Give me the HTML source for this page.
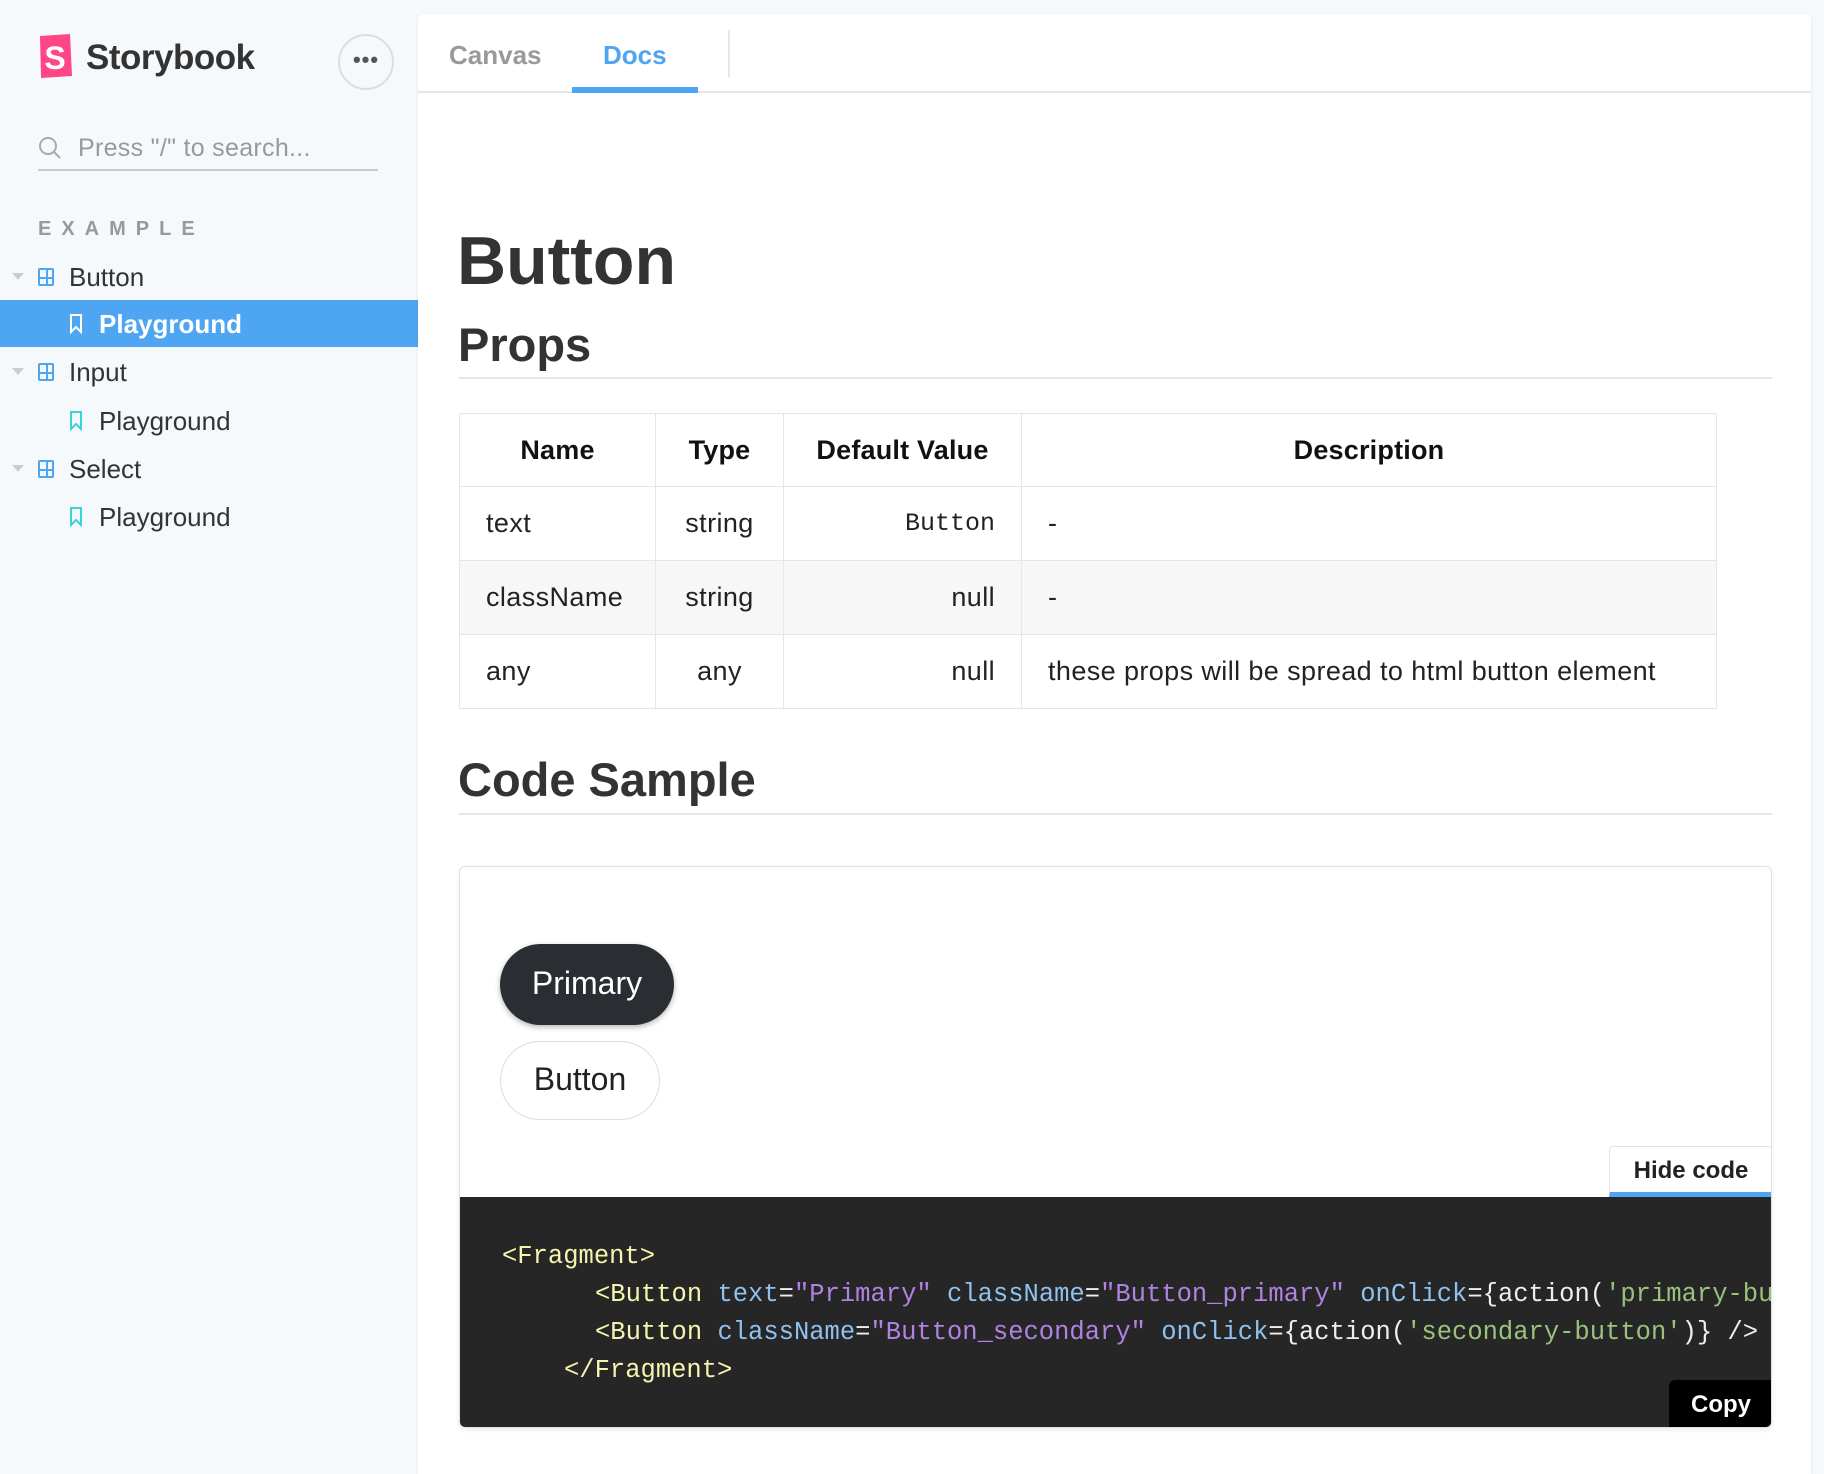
<!DOCTYPE html>
<html><head><meta charset="utf-8"><style>
*{box-sizing:border-box;margin:0;padding:0}
body{width:1824px;height:1458px;background:#f6f9fc;font-family:"Liberation Sans",sans-serif;color:#333;position:relative;overflow:hidden}
.abs{position:absolute}
.side-item{position:absolute;left:0;width:418px;height:48px;font-size:26px;line-height:48px;color:#333}
.main{position:absolute;left:418px;top:14px;width:1393px;height:1460px;background:#fff;border-radius:6px 6px 0 0;box-shadow:0 1px 4px rgba(0,0,0,.08)}
table{border-collapse:collapse;position:absolute;left:459px;top:413px;width:1258px;font-size:27px;letter-spacing:0.4px}
td,th{border:1.5px solid #e6e6e6;padding:0 26px}
th{height:73px;font-weight:bold;color:#111;letter-spacing:0.2px}
td{height:74px;color:#222}
.code{font-family:"Liberation Mono",monospace;font-size:25.5px;position:absolute;white-space:pre;color:#eee}
.t{color:#f5f5b0}.a{color:#8fc1ef}.s{color:#b082e2}.g{color:#9ac27d}
</style></head><body>
<svg class="abs" style="left:38px;top:34px" width="36" height="44" viewBox="0 0 36 44"><path d="M2 2 L32 0 L34 42 L3 44 Z" fill="#ff4785"/><text x="17" y="35" fill="#fff" font-family="Liberation Sans" font-weight="bold" font-size="32" text-anchor="middle">S</text></svg>
<div class="abs" style="left:86px;top:38px;font-size:35px;font-weight:bold;color:#333;letter-spacing:-0.5px">Storybook</div>
<div class="abs" style="left:338px;top:34px;width:56px;height:56px;border:2px solid #ddd;border-radius:50%;text-align:center;line-height:48px;font-size:22px;font-weight:bold;color:#555;letter-spacing:1px">•••</div>
<svg class="abs" style="left:38px;top:136px" width="24" height="24" viewBox="0 0 24 24"><circle cx="10" cy="10" r="8" fill="none" stroke="#aaa" stroke-width="2"/><path d="M16 16 L22 22" stroke="#aaa" stroke-width="2"/></svg>
<div class="abs" style="left:78px;top:134px;font-size:25px;color:#999;letter-spacing:0.3px">Press "/" to search...</div>
<div class="abs" style="left:38px;top:169px;width:340px;height:2px;background:#ccc"></div>
<div class="abs" style="left:38px;top:218px;font-size:20px;font-weight:bold;color:#999;letter-spacing:10px">EXAMPLE</div>

<div class="side-item" style="top:253px"><span class="abs" style="left:12px;top:20px;border:6px solid transparent;border-top:7px solid #ccc"></span><span class="abs" style="left:38px;top:15px;width:16px;height:18px;border:2px solid #4ea5f2;border-radius:2px;background:linear-gradient(#4ea5f2,#4ea5f2) 6px 0/2px 100% no-repeat,linear-gradient(#4ea5f2,#4ea5f2) 0 7px/100% 2px no-repeat"></span><span class="abs" style="left:69px">Button</span></div>
<div class="side-item" style="top:300px;height:47px;background:#4ea5f2;color:#fff;font-weight:bold"><svg class="abs" style="left:69px;top:14px" width="14" height="20" viewBox="0 0 14 20"><path d="M2 1 H12 V18 L7 13 L2 18 Z" fill="none" stroke="#fff" stroke-width="2"/></svg><span class="abs" style="left:99px">Playground</span></div>
<div class="side-item" style="top:348px"><span class="abs" style="left:12px;top:20px;border:6px solid transparent;border-top:7px solid #ccc"></span><span class="abs" style="left:38px;top:15px;width:16px;height:18px;border:2px solid #4ea5f2;border-radius:2px;background:linear-gradient(#4ea5f2,#4ea5f2) 6px 0/2px 100% no-repeat,linear-gradient(#4ea5f2,#4ea5f2) 0 7px/100% 2px no-repeat"></span><span class="abs" style="left:69px">Input</span></div>
<div class="side-item" style="top:397px"><svg class="abs" style="left:69px;top:14px" width="14" height="20" viewBox="0 0 14 20"><path d="M2 1 H12 V18 L7 13 L2 18 Z" fill="none" stroke="#37d5d3" stroke-width="2"/></svg><span class="abs" style="left:99px">Playground</span></div>
<div class="side-item" style="top:445px"><span class="abs" style="left:12px;top:20px;border:6px solid transparent;border-top:7px solid #ccc"></span><span class="abs" style="left:38px;top:15px;width:16px;height:18px;border:2px solid #4ea5f2;border-radius:2px;background:linear-gradient(#4ea5f2,#4ea5f2) 6px 0/2px 100% no-repeat,linear-gradient(#4ea5f2,#4ea5f2) 0 7px/100% 2px no-repeat"></span><span class="abs" style="left:69px">Select</span></div>
<div class="side-item" style="top:493px"><svg class="abs" style="left:69px;top:14px" width="14" height="20" viewBox="0 0 14 20"><path d="M2 1 H12 V18 L7 13 L2 18 Z" fill="none" stroke="#37d5d3" stroke-width="2"/></svg><span class="abs" style="left:99px">Playground</span></div>

<div class="main"></div>
<div class="abs" style="left:418px;top:91px;width:1393px;height:2px;background:#e6e6e6"></div>
<div class="abs" style="left:449px;top:40px;font-size:26px;font-weight:bold;color:#999">Canvas</div>
<div class="abs" style="left:603px;top:40px;font-size:26px;font-weight:bold;color:#4ea5f2">Docs</div>
<div class="abs" style="left:572px;top:87px;width:126px;height:6px;background:#4ea5f2"></div>
<div class="abs" style="left:728px;top:30px;width:2px;height:47px;background:#e6e6e6"></div>

<div class="abs" style="left:457px;top:222px;font-size:68px;font-weight:bold;color:#333;letter-spacing:0px">Button</div>
<div class="abs" style="left:458px;top:317px;font-size:47px;font-weight:bold;color:#333">Props</div>
<div class="abs" style="left:459px;top:377px;width:1313px;height:2px;background:#e6e6e6"></div>

<table>
<tr><th style="width:196px">Name</th><th style="width:128px">Type</th><th style="width:238px">Default Value</th><th>Description</th></tr>
<tr><td>text</td><td style="text-align:center">string</td><td style="text-align:right;font-family:'Liberation Mono',monospace;font-size:25px;letter-spacing:0">Button</td><td>-</td></tr>
<tr style="background:#f7f7f7"><td>className</td><td style="text-align:center">string</td><td style="text-align:right">null</td><td>-</td></tr>
<tr><td>any</td><td style="text-align:center">any</td><td style="text-align:right">null</td><td>these props will be spread to html button element</td></tr>
</table>

<div class="abs" style="left:458px;top:752px;font-size:47px;font-weight:bold;color:#333">Code Sample</div>
<div class="abs" style="left:459px;top:813px;width:1313px;height:2px;background:#e6e6e6"></div>

<div class="abs" style="left:459px;top:866px;width:1313px;height:562px;border:1.5px solid #e2e2e2;border-radius:6px;box-shadow:0 2px 5px rgba(0,0,0,.08);overflow:hidden;background:#fff">
 <div class="abs" style="left:40px;top:77px;width:174px;height:81px;background:#2a2d31;border-radius:41px;color:#fff;font-size:32px;text-align:center;line-height:79px;box-shadow:0 2px 6px rgba(0,0,0,.3)">Primary</div>
 <div class="abs" style="left:40px;top:174px;width:160px;height:79px;border:1.5px solid #ddd;border-radius:40px;color:#222;font-size:32px;text-align:center;line-height:74px">Button</div>
 <div class="abs" style="left:1149px;top:279px;width:164px;height:51px;border:1.5px solid #e2e2e2;border-bottom:5px solid #4ea5f2;border-radius:4px 4px 0 0;font-size:24px;font-weight:bold;color:#222;text-align:center;line-height:48px;background:#fff">Hide code</div>
 <div class="abs" style="left:0;top:330px;width:1313px;height:232px;background:#262626"></div>
 <div class="code" style="left:42px;top:375px"><span class="t">&lt;Fragment&gt;</span></div>
 <div class="code" style="left:135px;top:413px"><span class="t">&lt;Button</span> <span class="a">text</span>=<span class="s">"Primary"</span> <span class="a">className</span>=<span class="s">"Button_primary"</span> <span class="a">onClick</span>={action(<span class="g">'primary-button'</span>)} /&gt;</div>
 <div class="code" style="left:135px;top:451px"><span class="t">&lt;Button</span> <span class="a">className</span>=<span class="s">"Button_secondary"</span> <span class="a">onClick</span>={action(<span class="g">'secondary-button'</span>)} /&gt;</div>
 <div class="code" style="left:104px;top:489px"><span class="t">&lt;/Fragment&gt;</span></div>
 <div class="abs" style="left:1209px;top:513px;width:104px;height:49px;background:#000;color:#fff;font-size:24px;font-weight:bold;text-align:center;line-height:49px;border-radius:6px 0 0 0">Copy</div>
</div>
</body></html>
